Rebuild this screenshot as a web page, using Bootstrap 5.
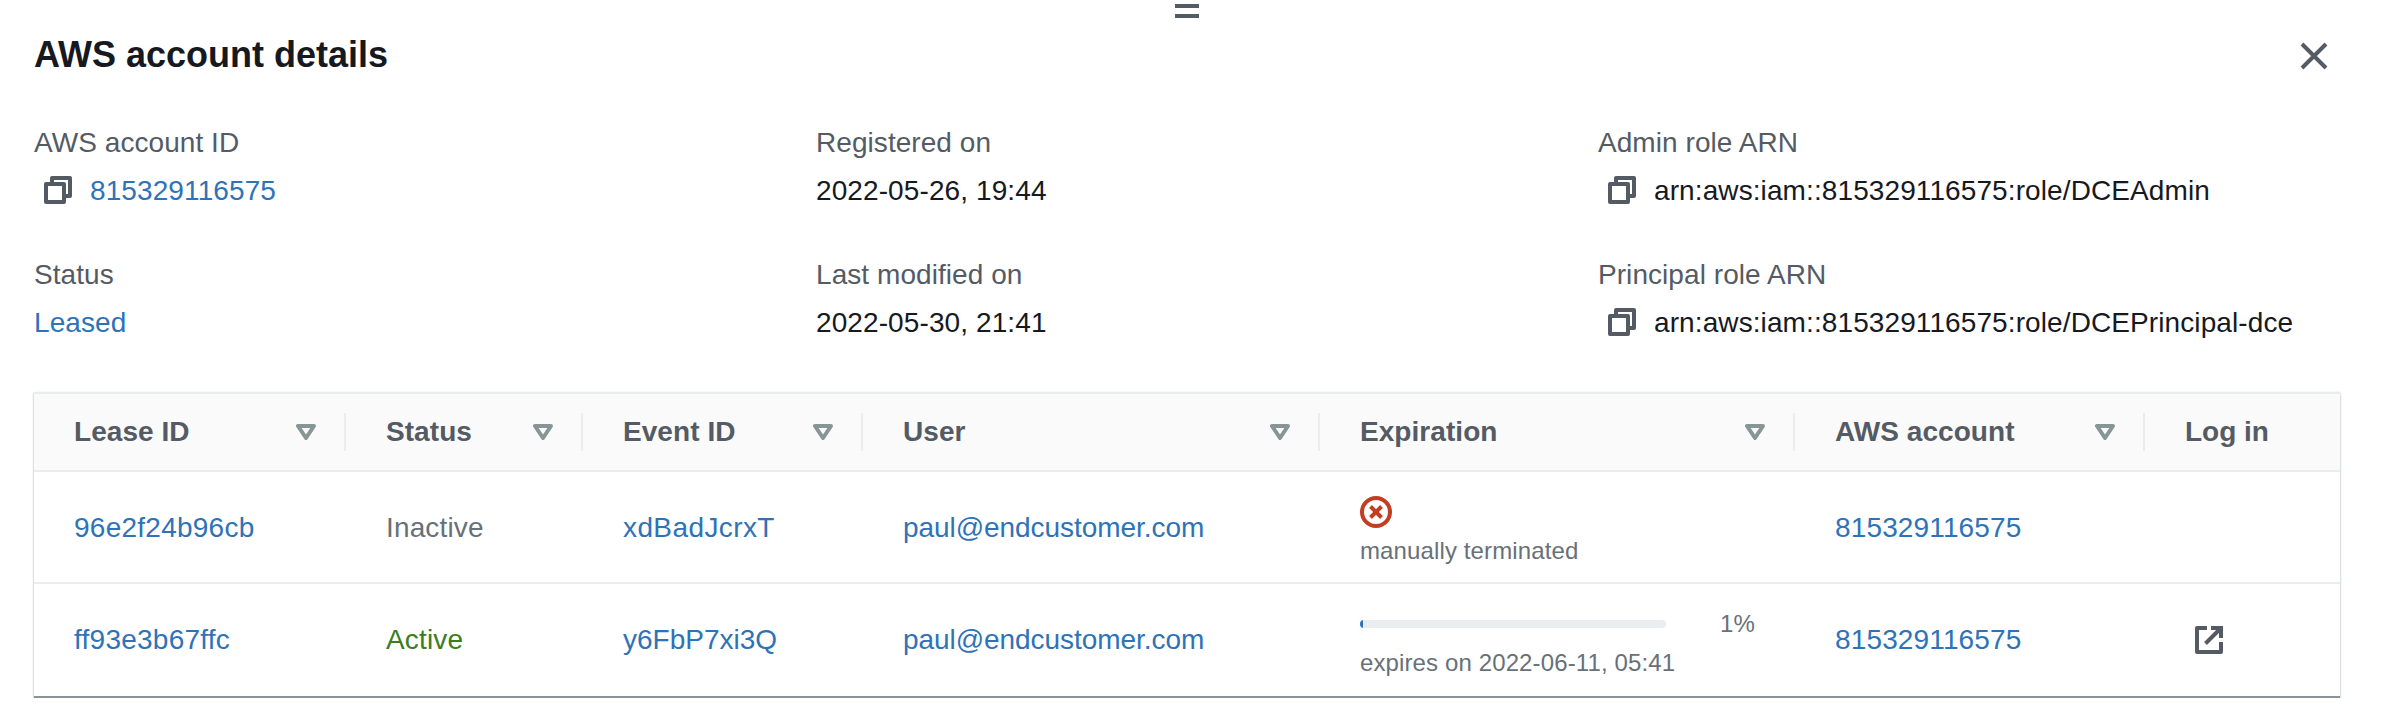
<!DOCTYPE html>
<html lang="en">
<head>
<meta charset="utf-8">
<title>AWS account details</title>
<link href="https://cdn.jsdelivr.net/npm/bootstrap@5.3.0/dist/css/bootstrap.min.css" rel="stylesheet">
<script src="https://cdn.jsdelivr.net/npm/bootstrap@5.3.0/dist/js/bootstrap.bundle.min.js"></script>
<style>
body{font-family:"Liberation Sans",Arial,sans-serif;font-size:28px;line-height:44px;color:#16191f;background:#fff;overflow:hidden}
a{color:#2e73b8;text-decoration:none}
svg{display:block;flex:none}
.panel-handle{height:20px;padding:4px 0 0 1175px}
.panel-head{padding:10px 66px 0 34px;height:96px}
.panel-head h1{font-size:36px;line-height:50px;font-weight:700}
.btn-close-panel{color:#545b64;margin-top:11px}
.details{padding:5px 0 0 34px;display:grid;grid-template-columns:782px 782px 1fr;row-gap:40px}
.details dt{font-weight:400;color:#545b64;height:48px;letter-spacing:.06px}
.details dd{margin:0;height:44px;letter-spacing:.1px}
.copy-ic{color:#545b64;margin:0 18px 2px 10px}
.lease-box{width:2306px;height:306px;margin:47px 0 0 34px;border-bottom:2px solid #879596;box-shadow:0 1px 2px 0 rgba(0,28,36,.4)}
.lease-table{table-layout:fixed;width:2306px;margin:0;color:#16191f;border-collapse:separate;border-spacing:0}
.lease-table>:not(caption)>*>*{padding:0 0 0 40px;border:0;vertical-align:middle}
.lease-table>thead>tr>th{height:80px;background:#fafafa;border-top:2px solid #eaeded;border-bottom:2px solid #eaeded;color:#545b64}
.th-in{height:38px;line-height:38px;border-right:2px solid #eaeded;padding-right:28px;letter-spacing:.06px}
.th-in.last{border:0;letter-spacing:0}
.lease-table>tbody>tr>td{height:112px}
.lease-table>tbody>tr:first-child>td{padding-top:2px;border-bottom:2px solid #eaeded}
.lease-table>tbody>tr>td.exp{vertical-align:top;padding-top:24px;padding-right:40px}
.id-text{letter-spacing:.25px}
.num-text{letter-spacing:.14px}
.ev-text{letter-spacing:.4px;font-kerning:none}
.mail-text{letter-spacing:-.06px}
.state-off{color:#687078}
.state-on{color:#3b7d1e}
.hint{font-size:24px;line-height:32px;color:#687078;letter-spacing:.12px}
.hint-line{margin-top:7px}
.prog{width:306px;height:8px;border-radius:4px;background:#eaeded}
.prog-fill{height:8px;background:#2e73b8}
.open-ic{margin-left:10px}
</style>
</head>
<body>
<svg class="d-none"><defs>
<symbol id="i-copy" viewBox="0 0 28 28"><path d="M2 8h18v18H2zM8 8V2h18v18h-6" fill="none" stroke="currentColor" stroke-width="4" stroke-linejoin="round"/></symbol>
<symbol id="i-sort" viewBox="0 0 20 16"><path d="M2 2h16l-8 12z" fill="none" stroke="#879596" stroke-width="4" stroke-linejoin="round"/></symbol>
</defs></svg>
<main>
<div class="panel-handle"><svg width="24" height="14" fill="#545b64"><path d="M0 0h24v4H0zM0 10h24v4H0z"/></svg></div>
<header class="panel-head d-flex justify-content-between align-items-start">
<h1 class="m-0">AWS account details</h1>
<svg class="btn-close-panel" width="32" height="32" fill="none" stroke="currentColor" stroke-width="4"><path d="M4 3l24 24M28 3L4 27"/></svg>
</header>
<dl class="details m-0">
<div><dt>AWS account ID</dt><dd class="d-flex align-items-center"><svg class="copy-ic" width="28" height="28"><use href="#i-copy"/></svg><a href="#">815329116575</a></dd></div>
<div><dt>Registered on</dt><dd>2022-05-26, 19:44</dd></div>
<div><dt>Admin role ARN</dt><dd class="d-flex align-items-center"><svg class="copy-ic" width="28" height="28"><use href="#i-copy"/></svg>arn:aws:iam::815329116575:role/DCEAdmin</dd></div>
<div><dt>Status</dt><dd><a href="#">Leased</a></dd></div>
<div><dt>Last modified on</dt><dd>2022-05-30, 21:41</dd></div>
<div><dt>Principal role ARN</dt><dd class="d-flex align-items-center"><svg class="copy-ic" width="28" height="28"><use href="#i-copy"/></svg>arn:aws:iam::815329116575:role/DCEPrincipal-dce</dd></div>
</dl>
<section class="lease-box">
<table class="table lease-table">
<colgroup><col style="width:312px"><col style="width:237px"><col style="width:280px"><col style="width:457px"><col style="width:475px"><col style="width:350px"><col></colgroup>
<thead><tr>
<th><div class="th-in d-flex justify-content-between align-items-center">Lease ID<svg width="20" height="16"><use href="#i-sort"/></svg></div></th>
<th><div class="th-in d-flex justify-content-between align-items-center">Status<svg width="20" height="16"><use href="#i-sort"/></svg></div></th>
<th><div class="th-in d-flex justify-content-between align-items-center">Event ID<svg width="20" height="16"><use href="#i-sort"/></svg></div></th>
<th><div class="th-in d-flex justify-content-between align-items-center">User<svg width="20" height="16"><use href="#i-sort"/></svg></div></th>
<th><div class="th-in d-flex justify-content-between align-items-center">Expiration<svg width="20" height="16"><use href="#i-sort"/></svg></div></th>
<th><div class="th-in d-flex justify-content-between align-items-center">AWS account<svg width="20" height="16"><use href="#i-sort"/></svg></div></th>
<th><div class="th-in last">Log in</div></th>
</tr></thead>
<tbody>
<tr>
<td class="id-text"><a href="#">96e2f24b96cb</a></td><td class="num-text"><span class="state-off">Inactive</span></td><td class="ev-text"><a href="#">xdBadJcrxT</a></td><td class="mail-text"><a href="#">paul@endcustomer.com</a></td>
<td class="exp"><svg width="32" height="32" fill="none" stroke="#c33d21" stroke-width="4"><circle cx="16" cy="16" r="14"/><path d="M10.5 10.5l11 11M21.5 10.5l-11 11"/></svg><div class="hint hint-line">manually terminated</div></td>
<td class="num-text"><a href="#">815329116575</a></td><td></td>
</tr>
<tr>
<td class="id-text"><a href="#">ff93e3b67ffc</a></td><td class="num-text"><span class="state-on">Active</span></td><td><a href="#">y6FbP7xi3Q</a></td><td class="mail-text"><a href="#">paul@endcustomer.com</a></td>
<td class="exp"><div class="d-flex align-items-center hint"><div class="prog overflow-hidden"><div class="prog-fill" style="width:1%"></div></div><span class="ms-auto">1%</span></div><div class="hint hint-line">expires on 2022-06-11, 05:41</div></td>
<td class="num-text"><a href="#">815329116575</a></td>
<td><svg class="open-ic" width="28" height="28" fill="none" stroke="#545b64" stroke-width="4"><path d="M12 2H2v24h24V16" stroke-linejoin="round"/><path d="M16 2h10v10M26 2L10.5 17.5"/></svg></td>
</tr>
</tbody>
</table>
</section>
</main>
</body>
</html>
